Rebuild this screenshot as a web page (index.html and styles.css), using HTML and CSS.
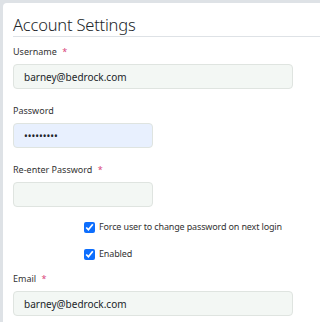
FILE: index.html
```html
<!DOCTYPE html>
<html lang="en">
<head>
    <meta charset="UTF-8">
    <meta name="viewport" content="width=device-width, initial-scale=1.0">
    <title>Account Settings</title>
    <link rel="stylesheet" href="styles.css">
</head>
<body>
    <div class="card">
        <h1 class="title">Account Settings</h1>

        <div class="field">
            <label class="label">Username <span class="req">*</span></label>
            <input class="input wide" type="text" value="barney@bedrock.com">
        </div>

        <div class="field">
            <label class="label">Password</label>
            <input class="input narrow autofill" type="password" value="barney123">
        </div>

        <div class="field">
            <label class="label">Re-enter Password <span class="req">*</span></label>
            <input class="input narrow" type="password" value="">
        </div>

        <div class="checks">
            <label class="check">
                <input type="checkbox" checked>
                <span>Force user to change password on next login</span>
            </label>
            <label class="check">
                <input type="checkbox" checked>
                <span>Enabled</span>
            </label>
        </div>

        <div class="field">
            <label class="label">Email <span class="req">*</span></label>
            <input class="input wide" type="text" value="barney@bedrock.com">
        </div>
    </div>
</body>
</html>
```

FILE: styles.css
```css
* {
    margin: 0;
    padding: 0;
    box-sizing: border-box;
}

body {
    font-family: "Noto Sans", "Open Sans", sans-serif;
    background: #dee2e6;
    padding: 3px 0 0 3px;
    overflow: hidden;
    color: #212529;
}

.card {
    background: #fff;
    border-radius: 4px 0 0 0;
    padding: 11px 0 20px 10px;
    min-height: 400px;
}

.title {
    font-size: 16.5px;
    font-weight: 300;
    line-height: 22px;
    letter-spacing: -0.2px;
    color: #212529;
    border-bottom: 1px solid #dee2e6;
    margin-bottom: 8px;
}

.field {
    display: flex;
    flex-direction: column;
    align-items: flex-start;
    margin-bottom: 15px;
}

.label {
    font-size: 9px;
    line-height: 14px;
    color: #333;
    margin-bottom: 5px;
}

.req {
    color: #d9467a;
    margin-left: 3px;
}

.input {
    height: 25px;
    border: 1px solid #dfe4e0;
    border-radius: 4px;
    background: #f3f7f4;
    padding: 0 10px;
    font-family: inherit;
    font-size: 10px;
    color: #212529;
    outline: none;
}

.wide {
    width: 280px;
}

.narrow {
    width: 140px;
}

.autofill {
    background: #e8f0fe;
}

.checks {
    display: flex;
    flex-direction: column;
    gap: 13px;
    padding-left: 71px;
    margin-top: -2px;
    margin-bottom: 11px;
}

.check {
    display: flex;
    align-items: center;
    gap: 4px;
    font-size: 9px;
    line-height: 14px;
    letter-spacing: -0.15px;
    color: #333;
}

.check input {
    width: 11px;
    height: 11px;
    accent-color: #0d6efd;
    margin: 0;
}
```
